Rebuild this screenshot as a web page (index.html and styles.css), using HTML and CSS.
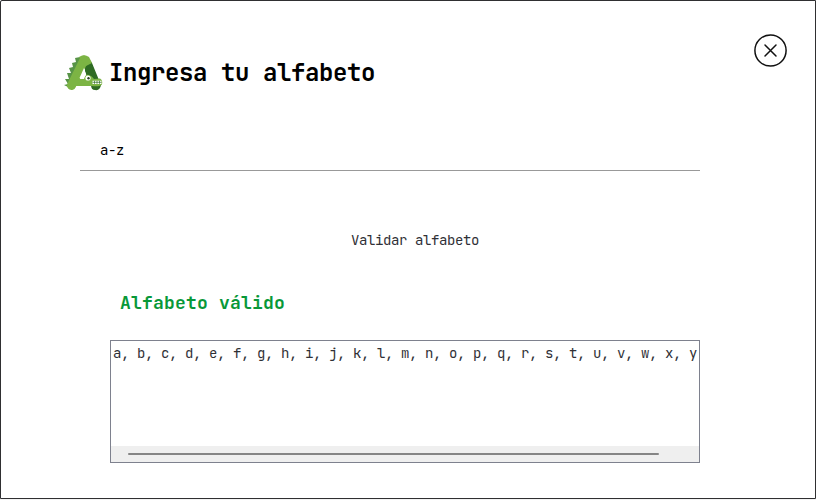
FILE: index.html
```
<!DOCTYPE html>
<html lang="es">
<head>
<meta charset="utf-8">
<title>Alfabeto</title>
<link rel="stylesheet" href="styles.css">
</head>
<body>
<main class="window">
  <header class="header">
    <svg class="logo" viewBox="0 0 40 40" aria-hidden="true">
      <path fill="#589447" d="M16 3 11 4 12 8 8 9 9 13 5 14 7 19 3 19 5 25 1 25 4 30 0 31 6 34 17 12Z"/>
      <path fill="#2f6b24" d="M21 8 Q25 3 28 9 L37 31Q36 37 31 36Q27 36 27 31L21 18Z"/>
      <path fill="none" stroke="#7cb444" stroke-width="9" stroke-linecap="round" stroke-linejoin="round" d="M7.5 31.5 20 6"/>
      <path fill="#7cb444" d="M15 3Q20 -.5 25 3L28 9 22 12Z"/>
      <path fill="#7cb444" d="M9 25H20Q21 20 25 21Q28 22 30 25L36 24.5Q39 26 38 30.5Q36 33 28 32H9Z"/>
      <path fill="#fff" d="M20 14 22 20 20 24H15.5Z"/>
      <path fill="#fff" d="M28.5 26.7H37.5V30H28.5Z"/>
      <path fill="none" stroke="#2f6b24" stroke-width=".7" d="M28.5 28.3H37.5M30.5 26.8v3m2.5-3v3m2.5-3v3"/>
      <circle cx="24" cy="24" r="2.6" fill="#fff"/>
      <circle cx="24.5" cy="24.3" r="1.2" fill="#294322"/>
    </svg>
    <h1 class="title">Ingresa tu alfabeto</h1>
    <button class="close" aria-label="Cerrar">
      <svg viewBox="0 0 34 34" fill="none" stroke="#111" stroke-width="1.5" stroke-linecap="round">
        <circle cx="17.5" cy="16.5" r="15.6"/>
        <path d="m12 11 11 11m0-11-11 11"/>
      </svg>
    </button>
  </header>
  <div class="field">a-z</div>
  <button class="validate">Validar alfabeto</button>
  <h2 class="status">Alfabeto válido</h2>
  <section class="result">
    <div class="letters">a, b, c, d, e, f, g, h, i, j, k, l, m, n, o, p, q, r, s, t, u, v, w, x, y</div>
    <div class="track"><div class="thumb"></div></div>
  </section>
</main>
</body>
</html>
```
FILE: styles.css
```
* { box-sizing: border-box; }
body {
  margin: 0;
  background: #f3f3f3;
  font: 14px/20px "JetBrains Mono", "DejaVu Sans Mono", monospace;
  letter-spacing: -0.4px;
  color: #303036;
}
.window {
  width: 816px;
  height: 499px;
  border: 1px solid #2f2f31;
  border-top-left-radius: 2px;
  background: #fff;
  overflow: hidden;
}
.header {
  display: flex;
  height: 129px;
  padding: 33px 28px 0 63px;
}
.logo { width: 40px; height: 40px; margin-top: 20px; }
.title {
  margin: 23px 0 0 5px;
  font-size: 24px;
  line-height: 32px;
  letter-spacing: -0.4px;
  color: #000;
}
.close {
  width: 34px;
  height: 34px;
  margin-left: auto;
  padding: 0;
  border: 0;
  background: none;
}
.close svg { display: block; overflow: visible; }
.field {
  width: 620px;
  height: 41px;
  margin-left: 79px;
  padding: 10px 20px;
  border-bottom: 1px solid #999;
  color: #000;
}
.validate {
  display: block;
  width: 620px;
  height: 20px;
  margin: 59px 0 0 104px;
  padding: 0;
  border: 0;
  background: none;
  font: inherit;
  letter-spacing: inherit;
  color: inherit;
}
.status {
  margin: 41px 0 0 119px;
  font-size: 18px;
  line-height: 24px;
  letter-spacing: 0.2px;
  color: #089838;
}
.result {
  display: flex;
  flex-direction: column;
  justify-content: space-between;
  width: 590px;
  height: 123px;
  margin: 25px 0 0 109px;
  border: 1px solid #7e818e;
}
.letters {
  padding: 2px 0 0 2px;
  white-space: nowrap;
  overflow: hidden;
}
.track {
  height: 16px;
  padding: 7px 40px 0 17px;
  background: #efefef;
}
.thumb { height: 2px; background: #858585; border-radius: 1px; }
```
